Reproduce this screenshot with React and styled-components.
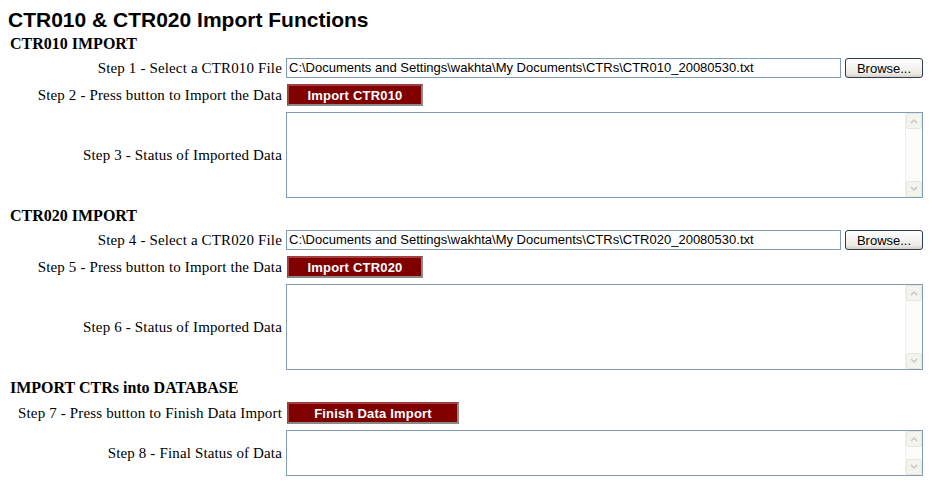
import React from 'react';
import styled, { createGlobalStyle } from 'styled-components';

const GlobalStyle = createGlobalStyle`
  body {
    margin: 0;
    background: #fff;
    font-family: "Liberation Serif", "Times New Roman", serif;
    color: #000;
  }
`;

const Page = styled.div`
  padding: 7px 9px 0 8px;
`;

const Title = styled.h1`
  margin: 0;
  font-family: "Liberation Sans", Arial, sans-serif;
  font-size: 21px;
  font-weight: 700;
  line-height: 26px;
`;

const Section = styled.section`
  display: flex;
  flex-direction: column;
  gap: 6px;
  margin-bottom: 7px;
`;

const Heading = styled.h2`
  margin: 2px 0 -1px 2px;
  font-size: 16px;
  font-weight: 700;
  line-height: 18px;
`;

const Row = styled.div`
  display: grid;
  grid-template-columns: 274px 1fr;
  column-gap: 4px;
  align-items: center;
`;

const Label = styled.label`
  text-align: right;
  font-size: 15px;
  letter-spacing: 0.15px;
  white-space: nowrap;
`;

const FileField = styled.div`
  display: flex;
  gap: 4px;
  align-items: center;
`;

const PathInput = styled.div`
  flex: 1;
  height: 20px;
  box-sizing: border-box;
  border: 1px solid #7f9db9;
  padding: 0 2px;
  font-family: "Liberation Sans", Arial, sans-serif;
  font-size: 13px;
  line-height: 18px;
  white-space: nowrap;
  overflow: hidden;
`;

const BrowseButton = styled.button`
  width: 78px;
  height: 20px;
  margin-right: 1px;
  border: 1px solid #2f3b4f;
  border-radius: 3px;
  background: linear-gradient(#ffffff, #ecebe6 80%, #d6d0c5);
  font-family: "Liberation Sans", Arial, sans-serif;
  font-size: 13px;
  padding: 0;
  color: #000;
`;

const ActionButton = styled.button`
  width: ${({ $width }) => $width}px;
  height: 22px;
  box-sizing: border-box;
  justify-self: start;
  margin-left: 1px;
  background: #800000;
  color: #fff;
  border: 2px solid;
  border-color: #a04040 #8a8a8a #8a8a8a #a04040;
  font-family: "Liberation Sans", Arial, sans-serif;
  font-size: 13px;
  letter-spacing: 0.2px;
  font-weight: 700;
  padding: 0;
`;

const StatusBox = styled.div`
  display: flex;
  height: ${({ $height }) => $height}px;
  box-sizing: border-box;
  border: 1px solid #7f9db9;
  margin-right: 1px;
  background: #fff;
`;

const StatusText = styled.div`
  flex: 1;
`;

const ScrollTrack = styled.div`
  width: 16px;
  display: flex;
  flex-direction: column;
  justify-content: space-between;
  background: #fcfcfb;
  border-left: 1px solid #f0f0ec;
`;

const ScrollArrow = styled.div`
  height: 16px;
  display: flex;
  align-items: center;
  justify-content: center;
  background: #f4f3ee;
  border: 1px solid #e8e6dd;
  border-radius: 2px;
  box-sizing: border-box;
`;

const Chevron = ({ up }) => (
  <svg width="8" height="6" viewBox="0 0 8 6">
    <path
      d={up ? 'M1 5 L4 2 L7 5' : 'M1 1 L4 4 L7 1'}
      fill="none"
      stroke="#c9c7ba"
      strokeWidth="1.5"
    />
  </svg>
);

function Status({ height }) {
  return (
    <StatusBox $height={height}>
      <StatusText />
      <ScrollTrack>
        <ScrollArrow>
          <Chevron up />
        </ScrollArrow>
        <ScrollArrow>
          <Chevron />
        </ScrollArrow>
      </ScrollTrack>
    </StatusBox>
  );
}

const sections = [
  {
    heading: 'CTR010 IMPORT',
    file: { label: 'Step 1 - Select a CTR010 File', path: 'C:\\Documents and Settings\\wakhta\\My Documents\\CTRs\\CTR010_20080530.txt' },
    action: { label: 'Step 2 - Press button to Import the Data', text: 'Import CTR010', width: 136 },
    status: { label: 'Step 3 - Status of Imported Data', height: 86 },
  },
  {
    heading: 'CTR020 IMPORT',
    file: { label: 'Step 4 - Select a CTR020 File', path: 'C:\\Documents and Settings\\wakhta\\My Documents\\CTRs\\CTR020_20080530.txt' },
    action: { label: 'Step 5 - Press button to Import the Data', text: 'Import CTR020', width: 136 },
    status: { label: 'Step 6 - Status of Imported Data', height: 86 },
  },
  {
    heading: 'IMPORT CTRs into DATABASE',
    action: { label: 'Step 7 - Press button to Finish Data Import', text: 'Finish Data Import', width: 172 },
    status: { label: 'Step 8 - Final Status of Data', height: 46 },
  },
];

export default function App() {
  return (
    <Page>
      <GlobalStyle />
      <Title>CTR010 &amp; CTR020 Import Functions</Title>
      {sections.map((s) => (
        <Section key={s.heading}>
          <Heading>{s.heading}</Heading>
          {s.file && (
            <Row>
              <Label>{s.file.label}</Label>
              <FileField>
                <PathInput>{s.file.path}</PathInput>
                <BrowseButton>Browse...</BrowseButton>
              </FileField>
            </Row>
          )}
          <Row>
            <Label>{s.action.label}</Label>
            <ActionButton $width={s.action.width}>{s.action.text}</ActionButton>
          </Row>
          <Row>
            <Label>{s.status.label}</Label>
            <Status height={s.status.height} />
          </Row>
        </Section>
      ))}
    </Page>
  );
}
